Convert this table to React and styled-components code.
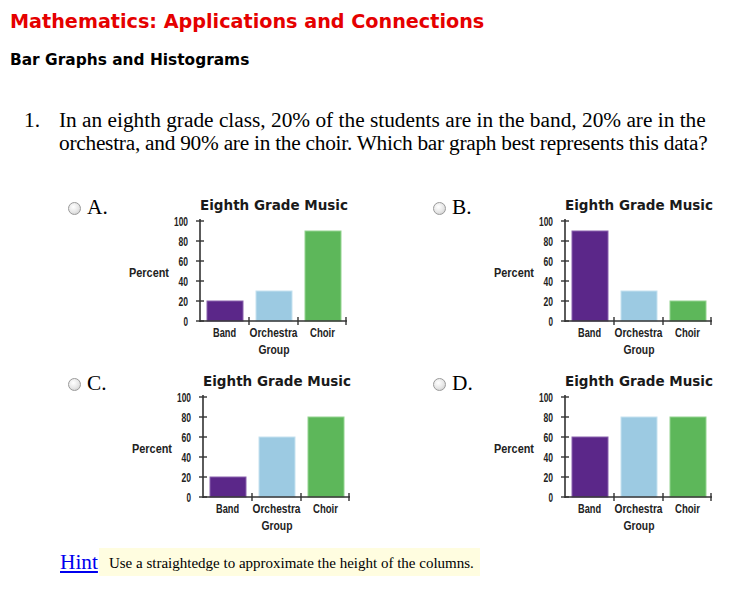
import React from "react";
import styled, { createGlobalStyle } from "styled-components";

const Global = createGlobalStyle`
  html, body { margin: 0; padding: 0; background: #ffffff; }
  body { font-family: "Liberation Serif", "Times New Roman", serif; color: #000; }
`;

const Page = styled.div`
  padding: 10px 0 0 10px;
  width: 720px;
  overflow: hidden;
`;

const Title = styled.h1`
  margin: 0;
  font-family: "DejaVu Sans", Verdana, sans-serif;
  font-weight: bold;
  font-size: 19.2px;
  line-height: 24px;
  color: #e50000;
`;

const Subtitle = styled.h2`
  margin: 17px 0 0 0;
  font-family: "DejaVu Sans", Verdana, sans-serif;
  font-weight: bold;
  font-size: 15.4px;
  line-height: 19px;
  color: #000;
`;

const Question = styled.div`
  margin-top: 39px;
  display: flex;
  font-size: 21.33px;
  line-height: 23px;
`;

const Num = styled.span`
  width: 49px;
  padding-left: 14px;
  box-sizing: border-box;
  flex: none;
`;

const QText = styled.div`
  width: 665px;
`;

const QLine = styled.div`
  white-space: nowrap;
  letter-spacing: ${(p) => p.$spacing || 0}px;
`;

const Options = styled.div`
  margin-top: 40px;
  margin-left: 56px;
  display: grid;
  grid-template-columns: 365px 290px;
  grid-auto-rows: 176px;
`;

const Option = styled.div`
  display: flex;
  align-items: flex-start;
`;

const Radio = styled.span`
  flex: none;
  width: 11px;
  height: 11px;
  margin: 7px 0 0 2px;
  border-radius: 50%;
  border: 1px solid #9a9a9a;
  background: radial-gradient(circle at 40% 35%, #ffffff 0%, #e6e6e6 55%, #c4c4c4 100%);
`;

const Letter = styled.span`
  flex: none;
  width: 38px;
  margin-left: 6px;
  font-size: 21.33px;
  line-height: 23px;
  margin-top: 1px;
`;

const HintRow = styled.div`
  display: flex;
  align-items: center;
  margin-left: 50px;
  margin-top: 1px;
`;

const HintLink = styled.a`
  font-size: 21.33px;
  line-height: 23px;
  color: #0000ee;
  text-decoration: underline;
  cursor: pointer;
`;

const HintBox = styled.span`
  margin-left: 1px;
  padding: 6px 6px 3px 10px;
  background: #fffde0;
  font-size: 15px;
  line-height: 19px;
`;

const COLORS = ["#5b2789", "#9ccae2", "#5db75a"];
const EDGES = ["#8a63ad", "#c5e2f0", "#93d48f"];
const CATS = [
  { name: "Band", w: 23 },
  { name: "Orchestra", w: 48 },
  { name: "Choir", w: 25 },
];
const TICKS = [
  { v: 100, w: 14 },
  { v: 80, w: 9.5 },
  { v: 60, w: 9.5 },
  { v: 40, w: 9.5 },
  { v: 20, w: 9.5 },
  { v: 0, w: 4.5 },
];

const ChartSvg = styled.svg`
  flex: none;
  display: block;
  margin-left: ${(p) => p.$shift || 0}px;
`;

function Chart({ values, shift }) {
  const axisX = 75;
  const baseY = 126;
  const label = {
    fontFamily: '"Liberation Sans", Arial, sans-serif',
    fontWeight: "bold",
    fontSize: 12.5,
    fill: "#222",
  };
  return (
    <ChartSvg width="232" height="166" viewBox="0 0 232 166" $shift={shift}>
      <text
        x={axisX}
        y="15"
        textLength="148"
        lengthAdjust="spacingAndGlyphs"
        style={{
          fontFamily: '"DejaVu Sans", Verdana, sans-serif',
          fontWeight: "bold",
          fontSize: 13.5,
          fill: "#1a1a1a",
        }}
      >
        Eighth Grade Music
      </text>
      <text x="4" y="81.5" textLength="40" lengthAdjust="spacingAndGlyphs" style={label}>
        Percent
      </text>
      {TICKS.map((t) => {
        const y = baseY - t.v;
        return (
          <g key={t.v}>
            <text
              x="63"
              y={y + 4.5}
              textAnchor="end"
              textLength={t.w}
              lengthAdjust="spacingAndGlyphs"
              style={label}
            >
              {t.v}
            </text>
            <line x1="71" x2="79" y1={y} y2={y} stroke="#333" strokeWidth="1.4" />
          </g>
        );
      })}
      {values.map((v, i) => {
        const x = axisX + 49 * i + 7;
        return (
          <rect
            key={i}
            x={x}
            y={baseY - v}
            width="36"
            height={v}
            fill={COLORS[i]}
            stroke={EDGES[i]}
            strokeWidth="1"
          />
        );
      })}
      <line x1={axisX} x2={axisX} y1="24" y2={baseY + 1} stroke="#333" strokeWidth="1.6" />
      <line x1={axisX} x2="222" y1={baseY} y2={baseY} stroke="#333" strokeWidth="1.6" />
      {[124, 173, 221].map((x) => (
        <line key={x} x1={x} x2={x} y1={baseY - 4} y2={baseY + 4} stroke="#333" strokeWidth="1.4" />
      ))}
      {CATS.map((c, i) => (
        <text
          key={c.name}
          x={axisX + 49 * i + 24.5}
          y="142"
          textAnchor="middle"
          textLength={c.w}
          lengthAdjust="spacingAndGlyphs"
          style={label}
        >
          {c.name}
        </text>
      ))}
      <text
        x="149"
        y="159"
        textAnchor="middle"
        textLength="31"
        lengthAdjust="spacingAndGlyphs"
        style={label}
      >
        Group
      </text>
    </ChartSvg>
  );
}

const OPTIONS = [
  { letter: "A.", values: [20, 30, 90], shift: 0 },
  { letter: "B.", values: [90, 30, 20], shift: 0 },
  { letter: "C.", values: [20, 60, 80], shift: 3 },
  { letter: "D.", values: [60, 80, 80], shift: 0 },
];

export default function App() {
  return (
    <>
      <Global />
      <Page>
        <Title>Mathematics: Applications and Connections</Title>
        <Subtitle>Bar Graphs and Histograms</Subtitle>
        <Question>
          <Num>1.</Num>
          <QText>
            <QLine>
              In an eighth grade class, 20% of the students are in the band, 20% are in the
            </QLine>
            <QLine $spacing={-0.25}>
              orchestra, and 90% are in the choir. Which bar graph best represents this data?
            </QLine>
          </QText>
        </Question>
        <Options>
          {OPTIONS.map((o) => (
            <Option key={o.letter}>
              <Radio />
              <Letter>{o.letter}</Letter>
              <Chart values={o.values} shift={o.shift} />
            </Option>
          ))}
        </Options>
        <HintRow>
          <HintLink>Hint</HintLink>
          <HintBox>Use a straightedge to approximate the height of the columns.</HintBox>
        </HintRow>
      </Page>
    </>
  );
}
